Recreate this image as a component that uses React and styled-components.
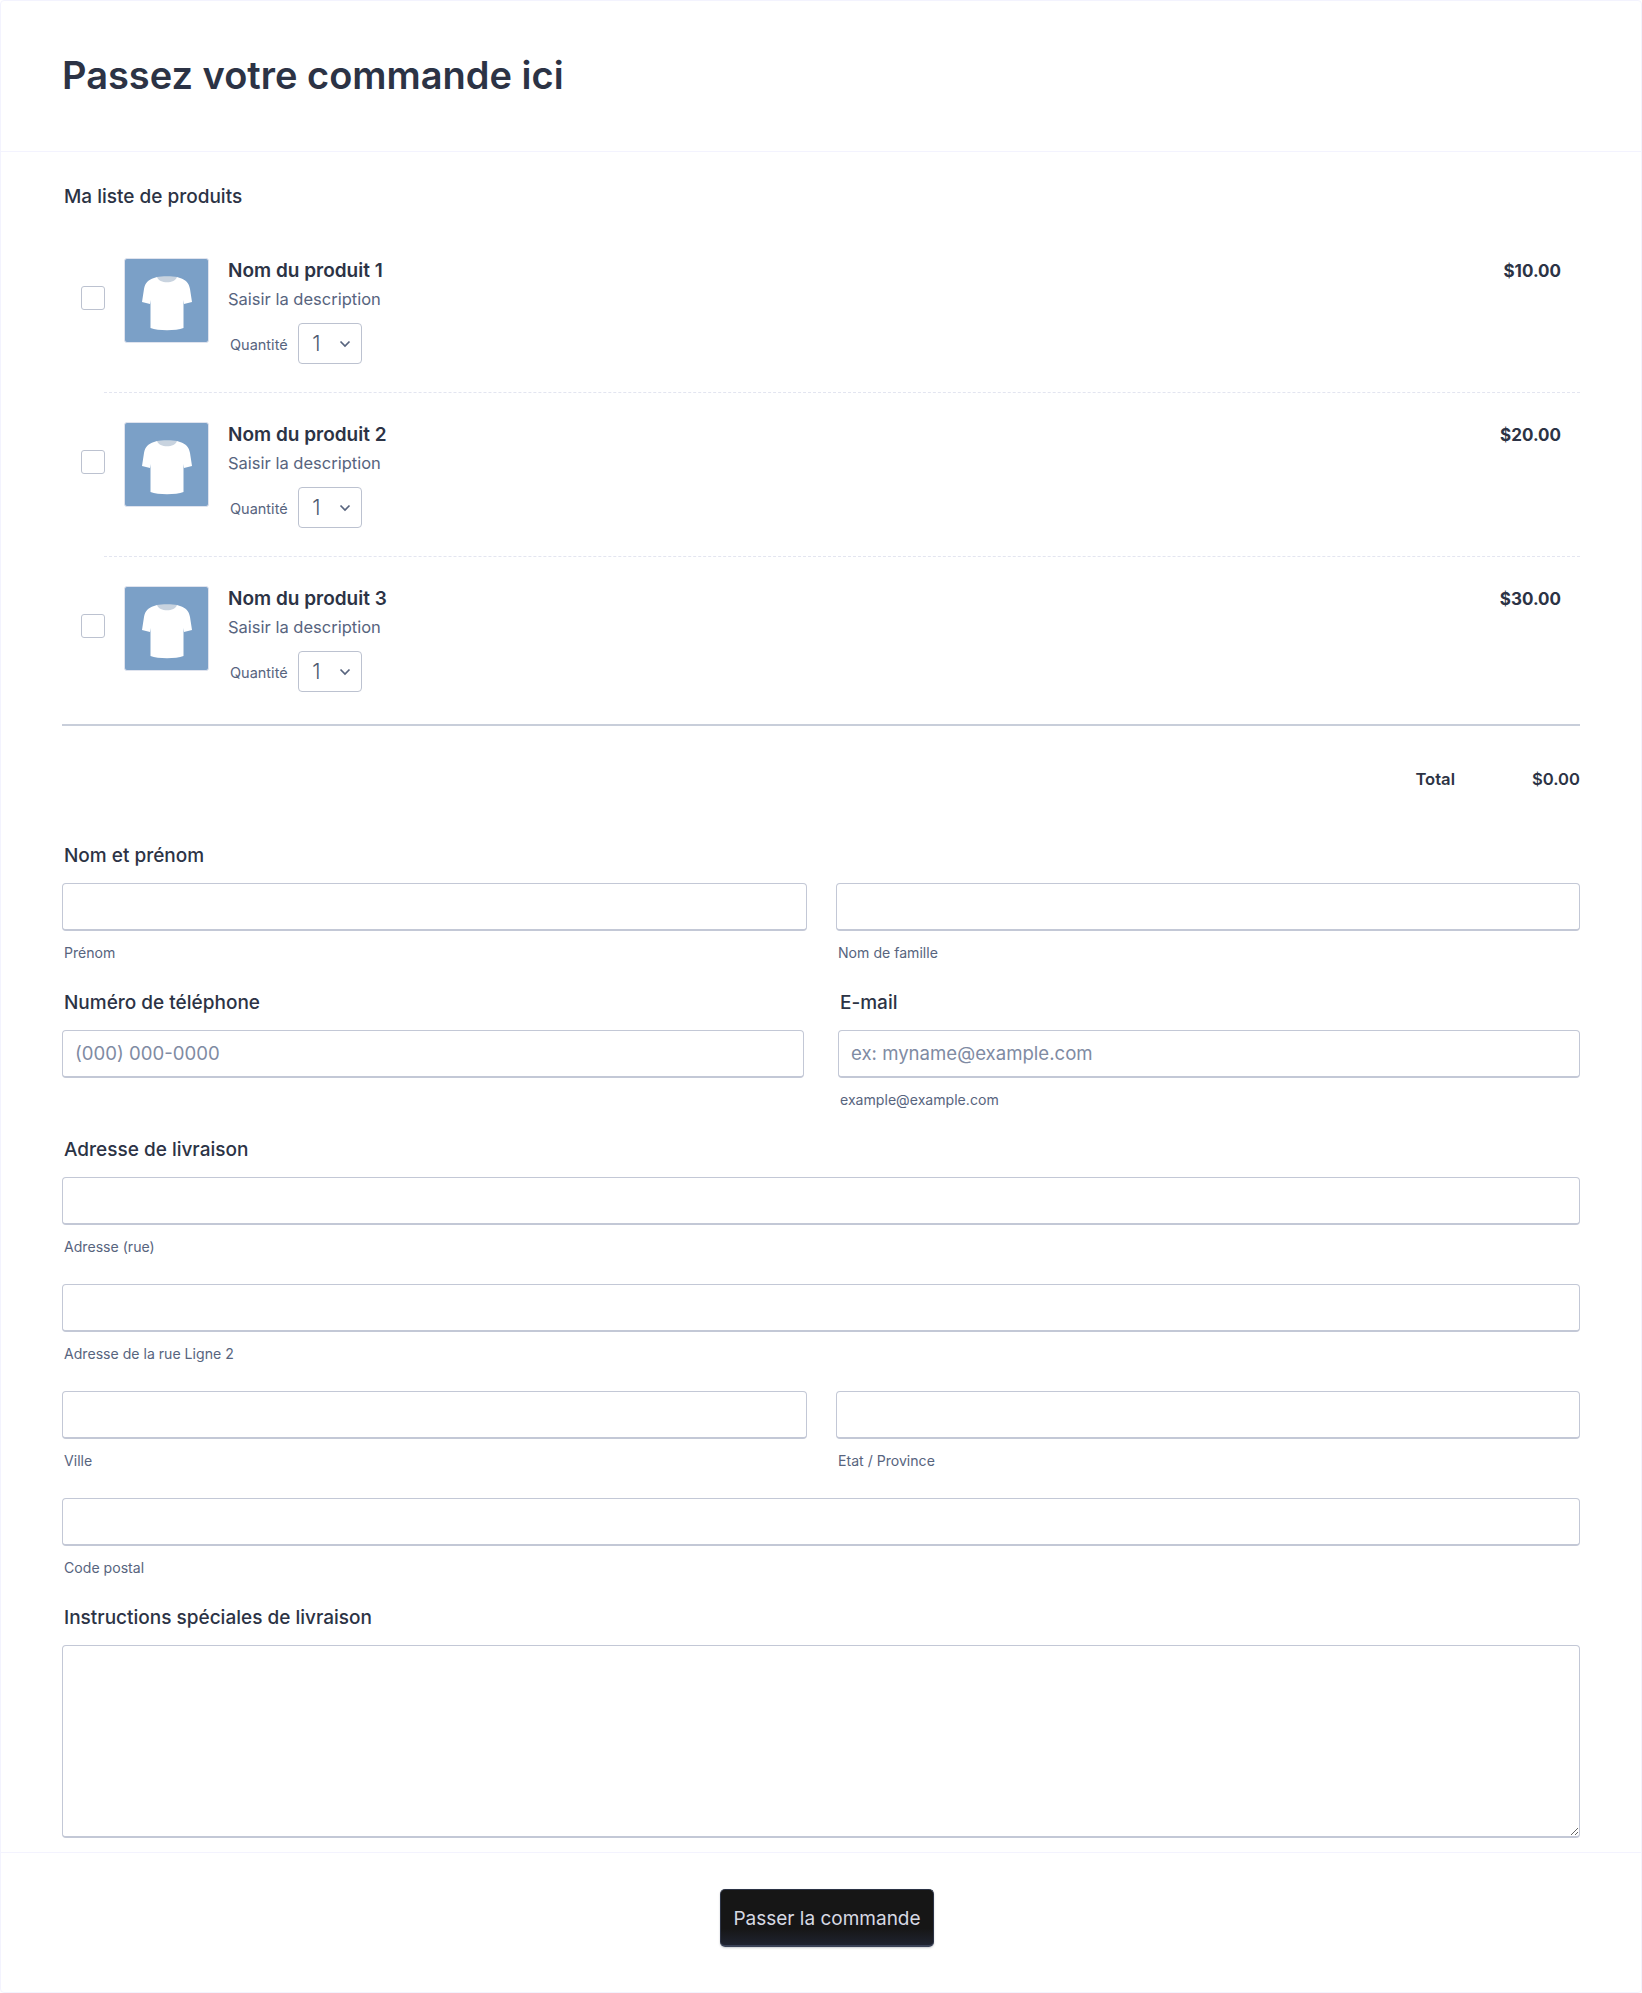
import React from "react";
import styled, { createGlobalStyle } from "styled-components";

const Global = createGlobalStyle`
  html, body { margin: 0; padding: 0; background: #fff; }
  * { box-sizing: border-box; }
  body { font-family: Inter, "Noto Sans", sans-serif; color: #2c3345; }
`;

const Card = styled.form`
  width: 1642px;
  height: 1993px;
  background: #fff;
  border: 1px solid #f3f3fe;
  border-radius: 4px;
  display: flex;
  flex-direction: column;
`;

const Header = styled.header`
  height: 151px;
  padding: 0 61px 3px;
  display: flex;
  align-items: center;
  border-bottom: 1px solid #f3f3fe;
`;

const Title = styled.h1`
  margin: 0;
  font-size: 38px;
  line-height: 48px;
  font-weight: 600;
  color: #2c3345;
`;

const Body = styled.main`
  flex: 1;
  padding: 32px 61px 0;
  display: flex;
  flex-direction: column;
`;

const Label = styled.label`
  display: block;
  margin: 0 0 0 2px;
  height: 26px;
  font-size: 19px;
  line-height: 26px;
  font-weight: 500;
  color: #2c3345;
`;

const ProductList = styled.ul`
  list-style: none;
  margin: 17.5px 0 0;
  padding: 0;
  height: 498px;
  border-bottom: 2px solid #c8ceda;
`;

const Product = styled.li`
  height: 164px;
  padding: 30px 19px 0 19px;
  display: flex;
  align-items: flex-start;
  position: relative;
  & + &::before {
    content: "";
    position: absolute;
    left: 42px;
    right: 0;
    top: 0;
    border-top: 1px dashed #e3e5f0;
  }
`;

const Check = styled.input.attrs({ type: "checkbox" })`
  appearance: none;
  margin: 28px 19px 0 0;
  width: 24px;
  height: 24px;
  flex: none;
  background: #fff;
  border: 1px solid #bcc2d0;
  border-radius: 3px;
`;

const Thumb = styled.div`
  width: 85px;
  height: 85px;
  padding-top: 6px;
  flex: none;
  background: #7ba0c7;
  border-radius: 3px;
  border: 1px solid #dfe3ee;
  display: flex;
  align-items: center;
  justify-content: center;
`;

const Info = styled.div`
  margin-left: 19px;
  flex: 1;
  min-width: 0;
`;

const Name = styled.div`
  margin-top: 1px;
  font-size: 19px;
  line-height: 24px;
  font-weight: 600;
  color: #2c3345;
`;

const Desc = styled.div`
  margin-top: 4px;
  font-size: 16.5px;
  line-height: 24px;
  color: #57647e;
`;

const QtyRow = styled.div`
  margin-top: 12.5px;
  display: flex;
  align-items: center;
  gap: 10.5px;
`;

const QtyLabel = styled.span`
  margin-left: 2px;
  margin-top: 3px;
  font-size: 14.5px;
  line-height: 20px;
  color: #57647e;
`;

const QtySelect = styled.div`
  width: 64px;
  height: 41px;
  padding: 0 10px 0 13px;
  display: flex;
  align-items: center;
  justify-content: space-between;
  border: 1px solid #bcc2d0;
  border-radius: 4px;
  font-size: 21px;
  font-weight: 300;
  color: #4f5a70;
  background: #fff;
`;

const Price = styled.div`
  font-size: 17px;
  line-height: 24px;
  font-weight: 700;
  color: #2c3345;
  margin-top: 1px;
`;

const TotalRow = styled.div`
  margin-top: 41px;
  height: 24px;
  display: flex;
  justify-content: flex-end;
  font-size: 16.6px;
  line-height: 24px;
  font-weight: 600;
  color: #2c3345;
`;

const TotalValue = styled.span`
  width: 125px;
  text-align: right;
`;

const Columns = styled.div`
  display: grid;
  grid-template-columns: ${(p) => (p.$wide ? "742px 742px" : "745px 744px")};
  justify-content: space-between;
`;

const Field = styled.div`
  margin-top: ${(p) => p.$top ?? 0}px;
`;

const Input = styled.input`
  display: block;
  width: 100%;
  height: 48px;
  margin-top: ${(p) => p.$gap ?? 0}px;
  padding: 0 12px;
  background: #fff;
  border: 1px solid #c3c8d6;
  border-bottom-width: 2px;
  border-radius: 4px;
  font: 400 18.6px Inter, sans-serif;
  color: #2c3345;
  &::placeholder { color: #7f8ba3; opacity: 1; }
`;

const Sub = styled.div`
  margin: 13px 0 0 2px;
  height: 18px;
  font-size: 14.1px;
  line-height: 18px;
  color: #57647e;
`;

const TextArea = styled.textarea`
  display: block;
  width: 100%;
  height: 193px;
  margin-top: 14px;
  background: #fff;
  border: 1px solid #c3c8d6;
  border-bottom-width: 2px;
  border-radius: 4px;
`;

const Footer = styled.footer`
  height: 140px;
  padding: 36px 0 0 12px;
  display: flex;
  justify-content: center;
  border-top: 1px solid #f3f3fe;
`;

const Submit = styled.button`
  width: 214px;
  height: 58px;
  padding: 2px 0 0;
  background: linear-gradient(#161616 70%, #1f2330);
  border: 1px solid #2c3345;
  border-bottom: 2px solid #3a4257;
  border-radius: 5px;
  box-shadow: 0 1px 2px rgba(44, 51, 69, 0.25);
  color: #d6d9e3;
  font: 400 19px Inter, sans-serif;
  white-space: nowrap;
`;

const Shirt = () => (
  <svg width="50" height="55" viewBox="0 0 50 55" aria-hidden="true">
    <path
      d="M15 1 L12 2 C6 4 3 7 2 13 L0 26 L8 28 L8.5 24 L8.5 52 C16 55 34 55 41.5 52 L41.5 24 L42 28 L50 26 L48 13 C47 7 44 4 38 2 L35 1 Z"
      fill="#fff"
    />
    <path d="M15 1 C19 0 31 0 35 1 C33 8 17 8 15 1 Z" fill="#c8d3df" />
  </svg>
);

const Chevron = () => (
  <svg width="12" height="8" viewBox="0 0 12 8" aria-hidden="true">
    <path d="M1.5 1.5 L6 6 L10.5 1.5" fill="none" stroke="#57647e" strokeWidth="1.7" />
  </svg>
);

const products = [
  { name: "Nom du produit 1", price: "$10.00" },
  { name: "Nom du produit 2", price: "$20.00" },
  { name: "Nom du produit 3", price: "$30.00" },
];

export default function App() {
  return (
    <>
      <Global />
      <Card>
        <Header>
          <Title>Passez votre commande ici</Title>
        </Header>
        <Body>
          <Label>Ma liste de produits</Label>
          <ProductList>
            {products.map((p) => (
              <Product key={p.name}>
                <Check />
                <Thumb>
                  <Shirt />
                </Thumb>
                <Info>
                  <Name>{p.name}</Name>
                  <Desc>Saisir la description</Desc>
                  <QtyRow>
                    <QtyLabel>Quantité</QtyLabel>
                    <QtySelect>
                      1
                      <Chevron />
                    </QtySelect>
                  </QtyRow>
                </Info>
                <Price>{p.price}</Price>
              </Product>
            ))}
          </ProductList>
          <TotalRow>
            Total
            <TotalValue>$0.00</TotalValue>
          </TotalRow>
          <Field $top={52}>
            <Label>Nom et prénom</Label>
            <Columns>
              <div>
                <Input $gap={14} />
                <Sub>Prénom</Sub>
              </div>
              <div>
                <Input $gap={14} />
                <Sub>Nom de famille</Sub>
              </div>
            </Columns>
          </Field>
          <Columns $wide>
            <Field $top={28}>
              <Label>Numéro de téléphone</Label>
              <Input $gap={14} placeholder="(000) 000-0000" />
            </Field>
            <Field $top={28}>
              <Label>E-mail</Label>
              <Input $gap={14} placeholder="ex: myname@example.com" />
              <Sub>example@example.com</Sub>
            </Field>
          </Columns>
          <Field $top={28}>
            <Label>Adresse de livraison</Label>
            <Input $gap={14} />
            <Sub>Adresse (rue)</Sub>
            <Input $gap={28} />
            <Sub>Adresse de la rue Ligne 2</Sub>
            <Columns>
              <div>
                <Input $gap={28} />
                <Sub>Ville</Sub>
              </div>
              <div>
                <Input $gap={28} />
                <Sub>Etat / Province</Sub>
              </div>
            </Columns>
            <Input $gap={28} />
            <Sub>Code postal</Sub>
          </Field>
          <Field $top={28}>
            <Label>Instructions spéciales de livraison</Label>
            <TextArea />
          </Field>
        </Body>
        <Footer>
          <Submit type="button">Passer la commande</Submit>
        </Footer>
      </Card>
    </>
  );
}
